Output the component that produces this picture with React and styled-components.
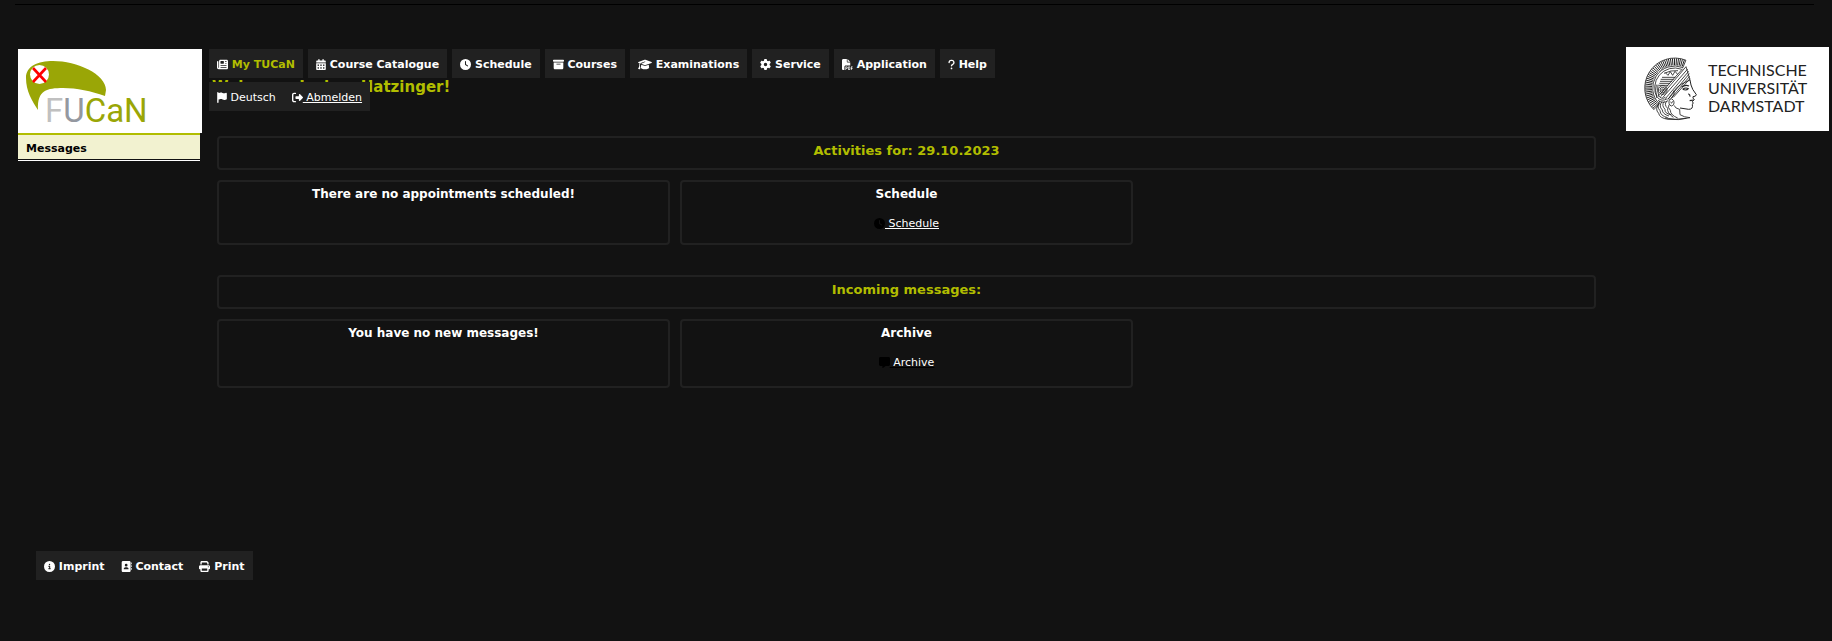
import React from "react";
import styled, { createGlobalStyle } from "styled-components";
import {
  FaNewspaper, FaCalendarDays, FaClock, FaBoxArchive, FaGraduationCap, FaGear,
  FaFilePdf, FaQuestion, FaFlag, FaRightFromBracket, FaCircleInfo, FaAddressBook,
  FaPrint, FaMessage,
} from "react-icons/fa6";

const GlobalStyle = createGlobalStyle`
  * { box-sizing: border-box; }
  body {
    margin: 0;
    background: #121212;
    color: #fff;
    font: 11px/15px Verdana, "DejaVu Sans", sans-serif;
  }
  h1, h2, h3, p, ul { margin: 0; padding: 0; }
  ul { list-style: none; }
  a { color: inherit; }
`;

const Page = styled.div`
  padding-bottom: 61px;
`;

const TopRule = styled.div`
  height: 5px;
  margin: 0 18px 0 15px;
  border-bottom: 1px solid #000;
`;

const Columns = styled.div`
  display: flex;
  align-items: flex-start;
  padding: 42px 3px 0 18px;
`;

const Sidebar = styled.aside`
  flex: none;
  width: 184px;
  margin: 2px 7px 0 0;
`;

const LogoLink = styled.a`
  display: block;
  background: #fff;
  svg { display: block; }
`;

const SideItem = styled.a`
  display: block;
  margin-right: 2px;
  padding: 6px 8px 3px;
  border-top: 2px solid #b1bd00;
  background: #f2f2d0;
  color: #000;
  font-weight: bold;
  text-decoration: none;
`;

const SideRule = styled.div`
  height: 2px;
  margin-right: 2px;
  border-bottom: 1px solid #fff;
`;

const Main = styled.main`
  flex: 1;
  min-width: 0;
  margin-top: 2px;
`;

const Nav = styled.nav`
  position: relative;
`;

const MenuList = styled.ul`
  display: flex;
  gap: 5px;
`;

const MenuLink = styled.a`
  display: flex;
  align-items: center;
  height: 29px;
  padding: 1px 8px 0;
  background: #212121;
  color: ${(p) => (p.$active ? "#b1bd00" : "#fff")};
  font-weight: ${(p) => (p.$plain ? "normal" : "bold")};
  text-decoration: none;
  white-space: nowrap;
  svg { flex: none; width: ${(p) => p.$iconWidth}px; height: 11px; color: #fff; }
  span { text-decoration: ${(p) => (p.$underlined ? "underline" : "none")}; white-space: pre; }
`;

const SubMenu = styled.ul`
  position: absolute;
  top: 33px;
  left: 0;
  display: flex;
  background: #212121;
`;

const Welcome = styled.h1`
  padding: 0 0 0 3px;
  color: #b1bd00;
  font-size: 15px;
  line-height: 18px;
`;

const Sections = styled.div`
  display: grid;
  gap: 30px;
  padding: 40px 30px 0 8px;
`;

const Section = styled.section`
  display: grid;
  grid-template-columns: repeat(3, 1fr);
  gap: 10px;
  text-align: center;
`;

const Banner = styled.h2`
  grid-column: 1 / -1;
  height: 34px;
  padding-top: 4px;
  border: 2px solid #212121;
  border-radius: 4px;
  color: #b1bd00;
  font-size: 13px;
  line-height: 18px;
`;

const Card = styled.div`
  min-height: ${(p) => (p.$tall ? 69 : 65)}px;
  padding-top: 4px;
  border: 2px solid #212121;
  border-radius: 4px;
`;

const CardTitle = styled.h3`
  font-size: 12px;
  line-height: 16px;
`;

const CardLink = styled.a`
  display: inline-flex;
  align-items: center;
  margin-top: 14px;
  text-decoration: none;
  svg { flex: none; width: 11px; height: 11px; color: #000; }
  span {
    white-space: pre;
    text-decoration: underline ${(p) => (p.$dim ? "#000" : "#fff")};
  }
`;

const University = styled.a`
  flex: none;
  display: flex;
  align-items: center;
  gap: 6px;
  width: 203px;
  height: 84px;
  padding-left: 14px;
  background: #fff;
  color: #222;
  font: 16px/18px Lato, sans-serif;
  text-decoration: none;
  span { padding-bottom: 2px; }
`;

const Footer = styled.footer`
  display: flex;
  margin: 163px 0 0 36px;
`;

const FooterList = styled.ul`
  display: flex;
  background: #212121;
`;

const menu = [
  ["My TUCaN", FaNewspaper, 11], ["Course Catalogue", FaCalendarDays, 10],
  ["Schedule", FaClock, 11], ["Courses", FaBoxArchive, 11],
  ["Examinations", FaGraduationCap, 14], ["Service", FaGear, 11],
  ["Application", FaFilePdf, 11], ["Help", FaQuestion, 7],
];

const footer = [["Imprint", FaCircleInfo], ["Contact", FaAddressBook], ["Print", FaPrint]];

function MenuEntry({ label, icon: Icon, size = 11, active, plain, underlined }) {
  return (
    <li>
      <MenuLink href="#menu" $iconWidth={size} $active={active} $plain={plain} $underlined={underlined}>
        <Icon />
        <span>{` ${label}`}</span>
      </MenuLink>
    </li>
  );
}

function ToucanLogo() {
  return (
    <svg width="184" height="84" viewBox="0 0 184 84" role="img" aria-label="FUCaN">
      <path d="M20 61C14 52 8 42 8 29C8 17 20 12 35 12C59 12 88 25 88 41L87 47C73 42 59 39 45 39C29 39 19 41 20 61Z" fill="#9aa606" />
      <circle cx="21.500" cy="25.500" r="9.500" fill="#fff" />
      <path d="M15 19L28 33M28 19L15 33" stroke="#f00" strokeWidth="2.600" />
      <text x="27" y="73" fontFamily="Roboto, sans-serif" fontSize="33">
        <tspan fill="#c0c0c0">F</tspan>
        <tspan fill="#9498a0">U</tspan>
        <tspan fill="#9aa606">CaN</tspan>
      </text>
    </svg>
  );
}

const polar = (r, deg) => {
  const a = (deg * Math.PI) / 180;
  return `${(104 + r * Math.cos(a)).toFixed(1)} ${(108 + r * Math.sin(a)).toFixed(1)}`;
};
const arc = (r, from, to) => `M${polar(r, from)}A${r} ${r} 0 ${to - from > 180 ? 1 : 0} 1 ${polar(r, to)}`;
const spokes = Array.from({ length: 40 }, (_, i) => {
  const a = 137 + i * 3.9;
  return `M${polar(68, a)}L${polar(89, a)}`;
}).join("");

function AthenaHead() {
  return (
    <svg width="62" height="74" viewBox="0 0 186 222" fill="none" stroke="#222" strokeWidth="2.500" aria-hidden="true">
      <path d={arc(90, 134, 292) + arc(66, 134, 292) + arc(60, 150, 290)} />
      <path d={`M${polar(66, 134)}L${polar(90, 134)}M${polar(66, 292)}L${polar(90, 292)}`} />
      <path d={spokes} strokeWidth="3" />
      <path d="M138 44L62 134M143 51L68 137M146 58L76 140M148 65L84 142M149 73L92 140M150 80L100 136M128 50L57 130M138 44L150 84" />
      <path d="M72 64Q92 54 114 56M66 76H106M62 82H101M60 88H96M58 94H90M56 100H84M76 62L84 70L91 59L98 70L105 58L112 66" />
      <circle cx="68" cy="114" r="13" />
      <circle cx="68" cy="114" r="8" />
      <circle cx="68" cy="114" r="3" />
      <path d="M49 98Q44 114 51 138M54 98Q50 116 57 134M54 130Q65 144 76 136M54 138Q65 150 82 140M54 145Q68 156 84 146" />
      <path d="M84 142Q96 125 103 116Q110 105 125 96L150 84M96 138Q106 126 101 116M88 143Q84 158 94 162Q105 159 101 146Q96 136 88 143M92 149Q95 158 98 148" />
      <path d="M150 84L153 99Q156 112 169 128Q168 134 159 134Q157 138 163 143L157 148Q162 153 157 158Q160 172 146 172L120 168" strokeWidth="3" />
      <path d="M125 105Q136 97 147 102M128 112Q137 105 145 110Q139 117 128 112M149 146L161 144M145 125Q151 128 150 134" strokeWidth="3.500" />
      <path d="M102 160Q106 170 119 172L120 188Q132 196 150 197Q116 206 84 202Q58 198 56 184Q43 171 58 154M60 147Q48 162 60 176Q61 192 83 197M66 149Q55 162 67 174Q67 186 87 192M73 149Q63 159 75 172Q73 185 94 188M80 148Q71 158 83 169Q80 182 100 196M87 158Q82 166 91 175Q91 189 113 198M75 198Q107 205 139 199" />
    </svg>
  );
}

export default function App() {
  return (
    <>
      <GlobalStyle />
      <Page>
        <TopRule />
        <Columns>
          <Sidebar>
            <LogoLink href="#home"><ToucanLogo /></LogoLink>
            <SideItem href="#messages">Messages</SideItem>
            <SideRule />
          </Sidebar>
          <Main>
            <Nav>
              <MenuList>
                {menu.map(([label, icon, size], i) => (
                  <MenuEntry key={label} label={label} icon={icon} size={size} active={i === 0} />
                ))}
              </MenuList>
              <SubMenu>
                <MenuEntry label="Deutsch" icon={FaFlag} size={10} plain />
                <MenuEntry label="Abmelden" icon={FaRightFromBracket} plain underlined />
              </SubMenu>
            </Nav>
            <Welcome>Welcome, Joshua Hatzinger!</Welcome>
            <Sections>
              <Section>
                <Banner>Activities for: 29.10.2023</Banner>
                <Card><CardTitle>There are no appointments scheduled!</CardTitle></Card>
                <Card>
                  <CardTitle>Schedule</CardTitle>
                  <CardLink href="#schedule"><FaClock /><span> Schedule</span></CardLink>
                </Card>
              </Section>
              <Section>
                <Banner>Incoming messages:</Banner>
                <Card $tall><CardTitle>You have no new messages!</CardTitle></Card>
                <Card $tall>
                  <CardTitle>Archive</CardTitle>
                  <CardLink href="#archive" $dim><FaMessage /><span> Archive</span></CardLink>
                </Card>
              </Section>
            </Sections>
          </Main>
          <University href="#tu">
            <AthenaHead />
            <span>TECHNISCHE<br />UNIVERSITÄT<br />DARMSTADT</span>
          </University>
        </Columns>
        <Footer>
          <FooterList>
            {footer.map(([label, icon]) => (
              <MenuEntry key={label} label={label} icon={icon} />
            ))}
          </FooterList>
        </Footer>
      </Page>
    </>
  );
}
